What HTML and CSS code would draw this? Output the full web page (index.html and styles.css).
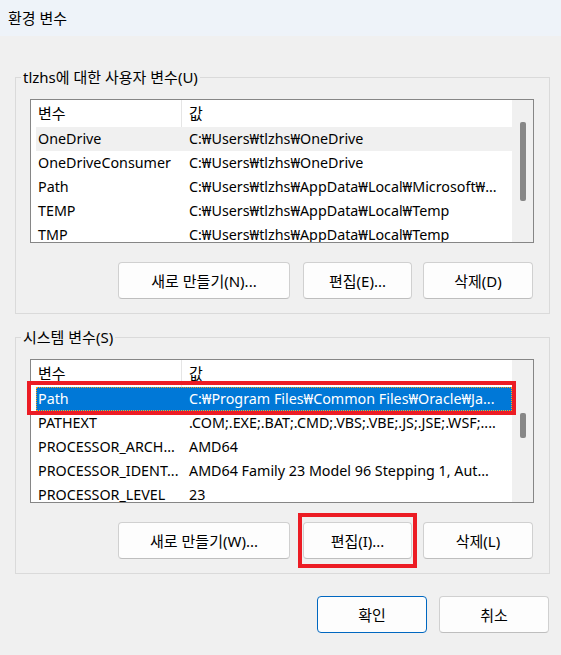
FILE: index.html
```html
<!DOCTYPE html>
<html lang="ko">
<head>
<meta charset="utf-8">
<title>환경 변수</title>
<link rel="stylesheet" href="styles.css">
</head>
<body>
<div class="window">
  <div class="titlebar">환경 변수</div>
  <div class="content">
    <fieldset class="group">
      <legend>tlzhs에 대한 사용자 변수(U)</legend>
      <div class="list">
        <div class="list-main">
          <div class="list-head"><div class="h1">변수</div><div class="h2">값</div></div>
          <div class="row hover"><div class="c1">OneDrive</div><div class="c2">C:₩Users₩tlzhs₩OneDrive</div></div>
          <div class="row"><div class="c1">OneDriveConsumer</div><div class="c2">C:₩Users₩tlzhs₩OneDrive</div></div>
          <div class="row"><div class="c1">Path</div><div class="c2">C:₩Users₩tlzhs₩AppData₩Local₩Microsoft₩...</div></div>
          <div class="row"><div class="c1">TEMP</div><div class="c2">C:₩Users₩tlzhs₩AppData₩Local₩Temp</div></div>
          <div class="row"><div class="c1">TMP</div><div class="c2">C:₩Users₩tlzhs₩AppData₩Local₩Temp</div></div>
        </div>
        <div class="scrollbar"><div class="thumb" style="margin-top:22px;height:79px"></div></div>
      </div>
      <div class="btn-row">
        <button class="btn w-new">새로 만들기(N)...</button>
        <button class="btn w-edit">편집(E)...</button>
        <button class="btn w-del">삭제(D)</button>
      </div>
    </fieldset>

    <fieldset class="group group2">
      <legend>시스템 변수(S)</legend>
      <div class="list">
        <div class="list-main">
          <div class="list-head"><div class="h1">변수</div><div class="h2">값</div></div>
          <div class="row sel"><div class="c1">Path</div><div class="c2">C:₩Program Files₩Common Files₩Oracle₩Ja...</div></div>
          <div class="row"><div class="c1">PATHEXT</div><div class="c2">.COM;.EXE;.BAT;.CMD;.VBS;.VBE;.JS;.JSE;.WSF;....</div></div>
          <div class="row"><div class="c1">PROCESSOR_ARCH...</div><div class="c2">AMD64</div></div>
          <div class="row"><div class="c1">PROCESSOR_IDENT...</div><div class="c2">AMD64 Family 23 Model 96 Stepping 1, Aut...</div></div>
          <div class="row"><div class="c1">PROCESSOR_LEVEL</div><div class="c2">23</div></div>
        </div>
        <div class="scrollbar"><div class="thumb" style="margin-top:53px;height:25px"></div></div>
        <div class="mark mark-row"></div>
      </div>
      <div class="btn-row">
        <button class="btn w-new">새로 만들기(W)...</button>
        <button class="btn w-edit marked">편집(I)...</button>
        <button class="btn w-del">삭제(L)</button>
      </div>
    </fieldset>

    <div class="footer">
      <button class="btn primary">확인</button>
      <button class="btn">취소</button>
    </div>
  </div>
</div>
</body>
</html>
```

FILE: styles.css
```css
* { box-sizing: border-box; }

body {
  margin: 0;
  background: #f0f0f0;
  font-family: "Noto Sans", "Noto Sans CJK KR", sans-serif;
  font-size: 15px;
  color: #000;
}

.window {
  width: 561px;
  height: 655px;
  position: relative;
  overflow: hidden;
}

.titlebar {
  height: 36px;
  line-height: 36px;
  padding-left: 8px;
  background: #eef3f9;
}

.content {
  padding: 31px 11px 0 15px;
}

.group {
  margin: 0;
  min-width: 0;
  border: 1px solid #dadada;
  padding: 12px 15px 14px 14px;
}

.group2 { margin-top: 13px; }

legend {
  margin-left: -9px;
  padding: 0 2px;
  height: 20px;
  line-height: 20px;
}

.list {
  position: relative;
  height: 144px;
  border: 1px solid #868686;
  background: #fff;
  display: flex;
}

.list-main {
  flex: 1;
  overflow: hidden;
}

.list-head {
  display: flex;
  height: 27px;
  line-height: 27px;
}

.h1 {
  width: 151px;
  padding-left: 7px;
  border-right: 1px solid #e5e5e5;
}

.h2 { padding-left: 7px; }

.row {
  display: flex;
  height: 24px;
  line-height: 24px;
  margin-left: 5px;
  white-space: nowrap;
  font-size: 14.3px;
}

.row .c1 {
  width: 146px;
  flex: none;
  padding-left: 2px;
}

.row .c2 { padding-left: 7px; }

.row.hover { background: #f0f0f0; }

.row.sel {
  background: #0078d7;
  color: #fff;
  outline: 1px dotted #ffa31a;
  outline-offset: -1px;
}

.scrollbar {
  width: 21px;
  flex: none;
  background: #f0f0f0;
  display: flex;
  justify-content: center;
  align-items: flex-start;
}

.thumb {
  width: 6px;
  background: #878787;
  border-radius: 2px;
}

.mark {
  position: absolute;
  border: 4px solid #ec1c24;
  pointer-events: none;
}

.mark-row {
  left: -4px;
  top: 21px;
  width: 489px;
  height: 34px;
}

.btn-row {
  display: flex;
  justify-content: flex-end;
  margin-top: 19px;
  padding-right: 1px;
}

.btn {
  position: relative;
  height: 37px;
  background: #fdfdfd;
  border: 1px solid #d0d0d0;
  border-bottom-color: #bebebe;
  border-radius: 4px;
  font-family: inherit;
  font-size: 15px;
  color: #000;
  padding: 0;
}

.w-new { width: 172px; }
.w-edit { width: 109px; margin-left: 13px; }
.w-del { width: 110px; margin-left: 11px; }

.marked::after {
  content: "";
  position: absolute;
  left: -6px;
  right: -6px;
  top: -10px;
  bottom: -10px;
  border: 4px solid #ec1c24;
}

.footer {
  display: flex;
  justify-content: flex-end;
  gap: 12px;
  margin-top: 22px;
  padding-right: 1px;
}

.footer .btn { width: 110px; }

.btn.primary {
  border-color: #0067c0;
}
```
